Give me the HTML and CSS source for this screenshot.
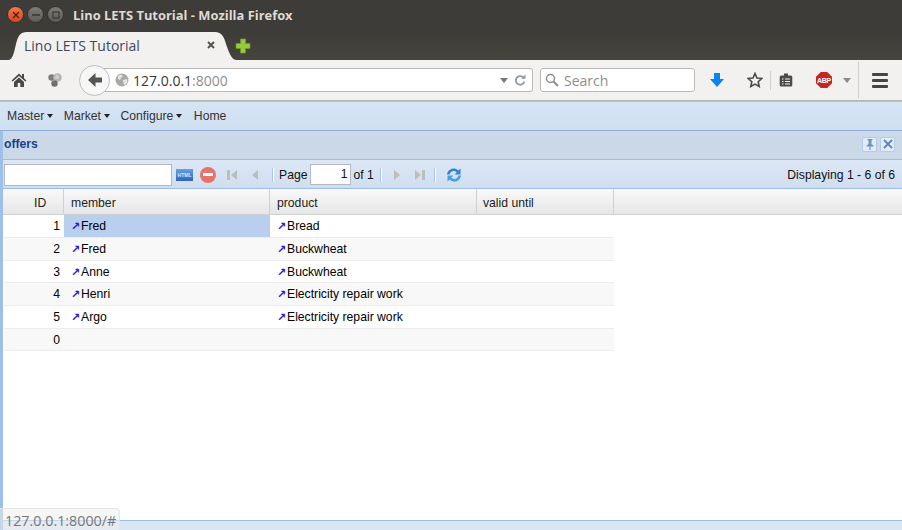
FILE: index.html
```html
<!DOCTYPE html>
<html lang="en">
<head>
<meta charset="utf-8">
<title>Lino LETS Tutorial</title>
<link rel="stylesheet" href="styles.css">
</head>
<body>
<div class="browser">
  <header class="titlebar">
    <div class="winbtns">
      <span class="winbtn close"><svg viewBox="0 0 8 8" width="8" height="8"><path d="M1 1l6 6M7 1l-6 6" stroke="#5a1a08" stroke-width="1.4"/></svg></span>
      <span class="winbtn"><svg viewBox="0 0 8 8" width="8" height="8"><path d="M0 4h8" stroke="#3a3a36" stroke-width="1.6"/></svg></span>
      <span class="winbtn"><svg viewBox="0 0 8 8" width="8" height="8"><rect x="1" y="1" width="6" height="6" fill="none" stroke="#3a3a36" stroke-width="1.2"/></svg></span>
    </div>
    <div class="wintitle">Lino LETS Tutorial - Mozilla Firefox</div>
  </header>
  <div class="tabstrip">
    <div class="tab">
      <span class="tabtext">Lino LETS Tutorial</span>
      <svg class="tabx" viewBox="0 0 8 8" width="8" height="8"><path d="M1 1l6 6M7 1l-6 6" stroke="#55554f" stroke-width="2"/></svg>
    </div>
    <svg class="newtab" viewBox="0 0 16 16" width="16" height="16"><path d="M5.500 1h5v4.500h4.500v5h-4.500v4.500h-5v-4.500h-4.500v-5h4.500z" fill="#97c93c" stroke="#6f9a28" stroke-width=".7"/></svg>
  </div>
  <nav class="navbar">
    <svg class="home" viewBox="0 0 16 16" width="16" height="16"><path d="M8 1.500L0.500 8.500l1.200 1L8 4l6.300 5.500 1.200-1-2.500-2.300V2h-2v2.400z M3 10v5h3.700v-4h2.600v4H13v-5L8 5.500z" fill="#4a4a48"/></svg>
    <svg class="social" viewBox="0 0 16 16" width="16" height="16"><circle cx="4.500" cy="5.500" r="3.200" fill="#7d7d7b"/><circle cx="10.500" cy="5.500" r="4.300" fill="#b5b5b3"/><circle cx="10" cy="5" r="2" fill="#d0d0ce"/><circle cx="7.500" cy="11.500" r="3.200" fill="#6f6f6d"/></svg>
    <div class="urlgroup">
      <span class="backbtn"><svg viewBox="0 0 18 18" width="18" height="18"><path d="M9.500 2L2 9l7.500 7v-4.500H16v-5H9.500z" fill="#555553"/></svg></span>
      <div class="urlbar">
        <svg class="globe" viewBox="0 0 14 14" width="14" height="14"><circle cx="7" cy="7" r="6.500" fill="#a9a9a7"/><path d="M3 3l3-1.500 2 1.500-2 2-1 2-2-1zM8 7l4-1 .5 3-3 3.500-1-2z" fill="#e4e4e2"/></svg>
        <span class="url">127.0.0.1<span class="port">:8000</span></span>
        <svg class="dropmark" viewBox="0 0 8 5" width="8" height="5"><path d="M0 0h8L4 5z" fill="#777"/></svg>
        <svg class="reload" viewBox="0 0 12 12" width="12" height="12"><path d="M10 4.500A4.300 4.300 0 1 0 10.300 7.500" fill="none" stroke="#8f9aa5" stroke-width="1.800"/><path d="M7 4.800h4.500V0.500z" fill="#8f9aa5"/></svg>
      </div>
    </div>
    <div class="searchbar">
      <svg viewBox="0 0 14 14" width="14" height="14"><circle cx="5.500" cy="5.500" r="4" fill="none" stroke="#8c8c8c" stroke-width="1.500"/><path d="M8.500 8.500L13 13" stroke="#8c8c8c" stroke-width="2"/></svg>
      <span>Search</span>
    </div>
    <svg class="download" viewBox="0 0 14 14" width="14" height="14"><path d="M4 0h6v6h4l-7 8-7-8h4z" fill="#0a84ef"/></svg>
    <svg class="star" viewBox="0 0 16 16" width="16" height="16"><path d="M8 1.500l2 4.500 4.800.5-3.600 3.200 1 4.800L8 12.100l-4.200 2.400 1-4.800L1.200 6.500 6 6z" fill="none" stroke="#4a4a48" stroke-width="1.600"/></svg>
    <i class="navsep"></i>
    <svg class="clip" viewBox="0 0 14 14" width="14" height="14"><rect x="0.700" y="2.500" width="12.600" height="11" rx="1.500" fill="#4a4a48"/><rect x="5" y="0.500" width="4" height="3" fill="#4a4a48"/><path d="M3 6h1.500M6 6h5M3 8.500h1.500M6 8.500h5M3 11h1.500M6 11h5" stroke="#f2f1ef" stroke-width="1.100"/></svg>
    <span class="abp"><span class="abptext">ABP</span></span>
    <svg class="abpdrop" viewBox="0 0 8 5" width="8" height="5"><path d="M0 0h8L4 5z" fill="#8a8a88"/></svg>
    <i class="navsep tall"></i>
    <span class="burger"><i></i><i></i><i></i></span>
  </nav>
  <main class="page">
    <div class="menubar">
      <span class="menu">Master<i class="caret"></i></span>
      <span class="menu">Market<i class="caret"></i></span>
      <span class="menu">Configure<i class="caret"></i></span>
      <span class="menu home-link">Home</span>
    </div>
    <div class="workspace">
      <div class="panelhead">
        <span class="paneltitle">offers</span>
        <span class="tool"><svg viewBox="0 0 10 12" width="10" height="12"><path d="M2.500 1h5v1l-1 .5V6l2 1.500V8.500H5.600V12h-1.200V8.500H1.500V7.500l2-1.500V2.500l-1-.5z" fill="#6f93c6"/></svg></span>
        <span class="tool"><svg viewBox="0 0 10 10" width="10" height="10"><path d="M1 1l8 8M9 1l-8 8" stroke="#5f84b8" stroke-width="1.800"/></svg></span>
      </div>
      <div class="toolbar">
        <input class="quick" type="text" aria-label="Quick search">
        <span class="htmlbtn">HTML</span>
        <span class="stopbtn"><i></i></span>
        <svg class="pg first" viewBox="0 0 12 12" width="12" height="12"><rect x="1" y="1" width="3" height="10" fill="#bdbdbd"/><path d="M11 1v10L5 6z" fill="#bdbdbd"/></svg>
        <svg class="pg prev" viewBox="0 0 12 12" width="12" height="12"><path d="M9 1v10L3 6z" fill="#bdbdbd"/></svg>
        <i class="tbsep sep-a"></i>
        <span class="pagelabel">Page</span>
        <span class="pagebox">1</span>
        <span class="oflabel">of 1</span>
        <i class="tbsep"></i>
        <svg class="pg next" viewBox="0 0 12 12" width="12" height="12"><path d="M3 1v10l6-5z" fill="#bdbdbd"/></svg>
        <svg class="pg last" viewBox="0 0 12 12" width="12" height="12"><path d="M1 1v10l6-5z" fill="#bdbdbd"/><rect x="8" y="1" width="3" height="10" fill="#bdbdbd"/></svg>
        <i class="tbsep sep-c"></i>
        <svg class="refresh" viewBox="0 0 18 18" width="18" height="18"><path d="M2 8.500C2.500 4.500 6 2 9.500 2.500c1.500.2 2.800.9 3.800 1.900L15.500 2.500v6h-6l2.200-2.100C10.800 5.500 9.800 5 8.800 5 6.800 5 5 6.500 4.700 8.500z" fill="#2f86d2"/><path d="M16 9.500c-.5 4-4 6.500-7.500 6-1.500-.2-2.800-.9-3.800-1.900L2.500 15.500v-6h6l-2.200 2.100c.9.900 1.900 1.400 2.900 1.400 2 0 3.800-1.500 4.100-3.500z" fill="#4a9fe0"/></svg>
        <span class="displaying">Displaying 1 - 6 of 6</span>
      </div>
      <div class="gridhead">
        <div class="hcell c-id">ID</div>
        <div class="hcell c-member">member</div>
        <div class="hcell c-product">product</div>
        <div class="hcell c-valid">valid until</div>
      </div>
      <div class="row">
        <div class="cell c-id">1</div><div class="cell c-member selected"><span class="arrow">↗</span>Fred</div><div class="cell c-product"><span class="arrow">↗</span>Bread</div><div class="cell c-valid"></div>
      </div>
      <div class="row alt">
        <div class="cell c-id">2</div><div class="cell c-member"><span class="arrow">↗</span>Fred</div><div class="cell c-product"><span class="arrow">↗</span>Buckwheat</div><div class="cell c-valid"></div>
      </div>
      <div class="row">
        <div class="cell c-id">3</div><div class="cell c-member"><span class="arrow">↗</span>Anne</div><div class="cell c-product"><span class="arrow">↗</span>Buckwheat</div><div class="cell c-valid"></div>
      </div>
      <div class="row alt">
        <div class="cell c-id">4</div><div class="cell c-member"><span class="arrow">↗</span>Henri</div><div class="cell c-product"><span class="arrow">↗</span>Electricity repair work</div><div class="cell c-valid"></div>
      </div>
      <div class="row">
        <div class="cell c-id">5</div><div class="cell c-member"><span class="arrow">↗</span>Argo</div><div class="cell c-product"><span class="arrow">↗</span>Electricity repair work</div><div class="cell c-valid"></div>
      </div>
      <div class="row alt">
        <div class="cell c-id">0</div><div class="cell c-member"></div><div class="cell c-product"></div><div class="cell c-valid"></div>
      </div>
      <div class="gridspace"></div>
      <div class="footstrip"></div>
    </div>
  </main>
  <div class="status">127.0.0.1:8000/#</div>
</div>
</body>
</html>
```
FILE: styles.css
```css
* { box-sizing: border-box; }
html, body { margin: 0; height: 100%; overflow: hidden; }
body { font-family: "Liberation Sans", Arial, sans-serif; background: #fff; }
.browser { position: relative; display: flex; flex-direction: column; width: 902px; height: 530px; overflow: hidden; }

.titlebar { display: flex; align-items: center; height: 32px; padding-bottom: 3px; background: #3d3c38; flex: none; }
.winbtns { display: flex; gap: 3px; margin-left: 7px; width: 66px; }
.winbtn { display: flex; align-items: center; justify-content: center; width: 17px; height: 17px; border-radius: 50%; background: linear-gradient(#7c7b75, #5c5b56); border: 1px solid #33322f; }
.winbtn.close { background: linear-gradient(#f2794a, #d9471c); }
.wintitle { font-family: "Open Sans", sans-serif; font-weight: 700; font-size: 12.900px; color: #dfdbd2; white-space: nowrap; }

.tabstrip { display: flex; align-items: center; height: 28px; background: linear-gradient(#3d3c38, #45443f); flex: none; padding-left: 8px; }
.tab { display: flex; align-items: center; width: 229px; height: 28px; padding: 0 22px 2px 16px; background: #f2f1ef; clip-path: path("M0 28 C5 28 6 20 8 12 C10 4 12 0 19 0 H207 C213 0 216 4 218 12 C221 20 223 28 229 28 Z"); }
.tabtext { font-family: "Open Sans", sans-serif; font-size: 14px; color: #3b4a5e; flex: 1; }
.newtab { margin-left: -2px; }

.navbar { display: flex; align-items: center; height: 41px; flex: none; background: #f2f1ef; border-bottom: 1px solid #b5b5b3; padding-left: 11px; }
.social { margin-left: 20px; }
.urlgroup { position: relative; display: flex; align-items: center; margin-left: 16px; width: 454px; }
.backbtn { position: relative; display: flex; align-items: center; justify-content: center; width: 31px; height: 31px; border: 1px solid #b8c0c8; border-radius: 50%; background: #f7f7f6; margin-right: -6px; z-index: 1; }
.urlbar { display: flex; align-items: center; flex: 1; height: 24px; background: #fff; border: 1px solid #b9b9b7; border-left: none; border-radius: 0 3px 3px 0; padding: 0 6px 0 11px; }
.globe { margin-right: 4px; }
.url { font-family: "Open Sans", sans-serif; font-size: 14px; color: #383838; flex: 1; }
.port { color: #8e8e8e; }
.dropmark { margin-right: 6px; }
.searchbar { display: flex; align-items: center; gap: 5px; width: 155px; height: 24px; margin-left: 7px; background: #fff; border: 1px solid #b9b9b7; border-radius: 3px; padding: 0 4px; font-family: "Open Sans", sans-serif; font-size: 14px; color: #8e8e8e; }
.download { margin-left: 15px; }
.star { margin-left: 23px; }
.navsep { width: 1px; height: 19px; background: #cfcecb; margin: 0 8px 0 7px; }
.navsep.tall { height: 36px; margin: 0 13px 0 7px; }
.abp { display: flex; align-items: center; justify-content: center; width: 16px; height: 16px; margin-left: 23px; background: #c4271f; clip-path: polygon(30% 0, 70% 0, 100% 30%, 100% 70%, 70% 100%, 30% 100%, 0 70%, 0 30%); }
.abptext { font-size: 7px; font-weight: 700; color: #fff; letter-spacing: -.3px; }
.abpdrop { margin-left: 11px; }
.burger { display: flex; flex-direction: column; gap: 3px; width: 16px; }
.burger i { display: block; height: 3px; background: #454543; border-radius: 1px; }

.page { flex: 1; display: flex; flex-direction: column; min-height: 0; font-size: 12.200px; }
.menubar { display: flex; align-items: center; height: 30px; flex: none; background: linear-gradient(#d6e4f4, #cfdff1); border-top: 1px solid #a9c6ea; border-bottom: 1px solid #8eb0dc; color: #333; padding-left: 7px; gap: 11px; }
.menu { display: flex; align-items: center; gap: 2.500px; }
.home-link { margin-left: 1px; }
.caret { width: 0; height: 0; border: 3.500px solid transparent; border-top: 4px solid #222; border-bottom: 0; }

.workspace { flex: 1; display: flex; flex-direction: column; min-height: 0; border-left: 3px solid #9dbfe9; }
.panelhead { display: flex; align-items: center; height: 28px; flex: none; padding: 0 7px 2px 1px; gap: 3px; background: #cbd8e8; color: #15428b; }
.paneltitle { font-weight: 700; flex: 1; }
.tool { display: flex; align-items: center; justify-content: center; width: 15px; height: 15px; background: #e1ecf9; border: 1px solid #b3cbe8; border-radius: 2px; }

.toolbar { display: flex; align-items: center; height: 30px; flex: none; padding: 1px 7px 0 1px; background: linear-gradient(#dce7f5, #d0def0); border-top: 1px solid #9dbde6; border-bottom: 1px solid #9dbde6; color: #111; }
.quick { width: 168px; height: 22px; padding: 0; background: #fff; border: 1px solid #b5b8c8; }
.htmlbtn { width: 17px; height: 12px; margin-left: 4px; background: linear-gradient(#6aa0e0, #2a66bf); color: #dce9fa; font-size: 5px; font-weight: 700; line-height: 12px; text-align: center; overflow: hidden; }
.stopbtn { display: flex; align-items: center; justify-content: center; width: 16px; height: 16px; margin-left: 7px; border-radius: 50%; background: #e8736a; }
.stopbtn i { width: 10px; height: 3px; background: #fff; }
.pg { flex: none; }
.first { margin-left: 10px; }
.prev { margin-left: 11px; }
.tbsep { width: 2px; height: 14px; background: #fff; border-left: 1px solid #a9c6ea; margin: 0 6px; flex: none; }
.sep-a { margin: 0 5px 0 11px; }
.sep-c { margin: 0 9px 0 8px; }
.pagebox { width: 41px; height: 21px; margin: 0 2px 0 3px; padding-right: 3px; background: #fff; border: 1px solid #b5b8c8; text-align: right; line-height: 19px; }
.next { margin-left: 3px; }
.last { margin-left: 11px; }
.displaying { margin-left: auto; }

.gridhead { display: flex; height: 26.400px; flex: none; padding-left: 1px; background: linear-gradient(#f9f9f9, #e5e6e8); border-bottom: 1px solid #d0d0d0; color: #222; }
.hcell { height: 100%; padding: 0 7px; line-height: 29px; border-right: 1px solid #d0d0d0; }
.hcell.c-id { padding-left: 30px; }
.hcell.c-valid { padding-left: 6px; }

.c-id { width: 60px; }
.c-member { width: 206px; }
.c-product { width: 207px; }
.c-valid { width: 137px; }

.row { display: flex; width: 610px; margin-left: 1px; height: 22.670px; flex: none; background: #fff; border-bottom: 1px solid #ededed; }
.row.alt { background: #f8f8f8; }
.cell { padding: 0 7px; line-height: 23.500px; color: #000; white-space: nowrap; }
.cell.c-id { text-align: right; padding-right: 4px; }
.cell.selected { background: #b8cfee; }
.arrow { display: inline-block; width: 10px; color: #2a14e8; font-family: "DejaVu Sans", sans-serif; font-weight: 700; font-size: 11px; line-height: 1; }

.gridspace { flex: 1; }
.footstrip { height: 10px; flex: none; background: #dbe6f4; border-top: 1px solid #9dbfe9; }

.status { position: absolute; left: 0; bottom: 0; padding: 0 3px 0 5px; height: 22px; line-height: 24px; background: rgba(240, 240, 238, .5); border: 1px solid #e4e4e2; border-left: 0; border-bottom: 0; border-radius: 0 4px 0 0; font-family: "Open Sans", sans-serif; font-size: 14.300px; color: #777; }
```
